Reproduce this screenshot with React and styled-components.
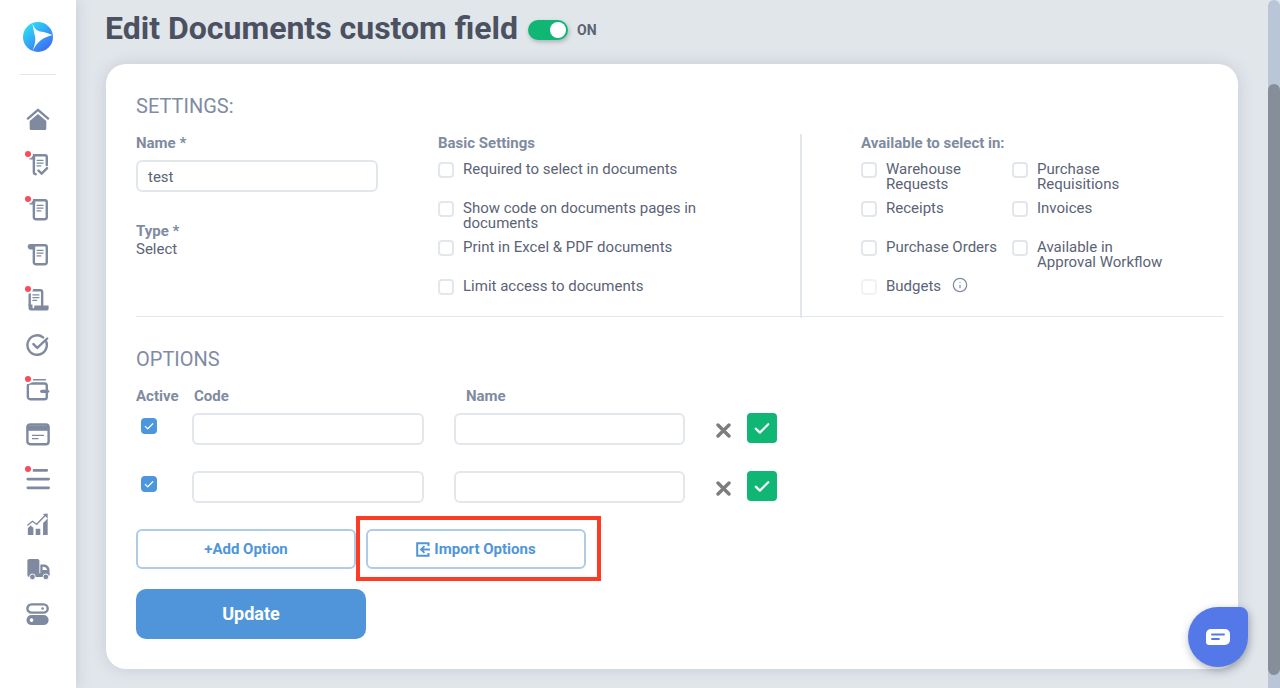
import React from 'react';
import styled, { createGlobalStyle } from 'styled-components';
import { Info } from 'lucide-react';

const GlobalStyle = createGlobalStyle`
  html, body {
    margin: 0;
    height: 100%;
    overflow: hidden;
    background: #e1e6eb;
    font-family: Roboto, "Liberation Sans", sans-serif;
  }
  * { box-sizing: border-box; }
`;

const Page = styled.div`
  display: flex;
  width: 1280px;
  height: 688px;
  overflow: hidden;
  position: relative;
`;

const Sidebar = styled.nav`
  width: 76px;
  flex: none;
  background: #fff;
  box-shadow: 0 0 14px rgba(90, 105, 125, 0.22);
  display: flex;
  flex-direction: column;
  align-items: center;
  padding-top: 22px;
  z-index: 2;
`;

const SideRule = styled.div`
  width: 36px;
  height: 1px;
  background: #e4e6e9;
  margin: 22px 0 32px;
`;

const NavItem = styled.div`
  position: relative;
  width: 24px;
  height: 45px;
  display: flex;
  align-items: flex-start;
  justify-content: center;
  color: #7f8aa0;
  &::before {
    content: '';
    display: ${props => (props.$dot ? 'block' : 'none')};
    position: absolute;
    left: -1px;
    top: -1px;
    width: 6px;
    height: 6px;
    border-radius: 50%;
    background: #fb4a58;
    box-shadow: 0 0 0 2px #fff;
    z-index: 1;
  }
`;

const Main = styled.main`
  flex: 1;
  min-width: 0;
  padding-left: 30px;
`;

const Header = styled.header`
  height: 64px;
  display: flex;
  align-items: flex-start;
`;

const Title = styled.h1`
  margin: 0 0 0 -1px;
  font-size: 32px;
  line-height: 56px;
  font-weight: 700;
  color: #4b5161;
`;

const Toggle = styled.div`
  width: 40px;
  height: 20px;
  border-radius: 10px;
  background: #10b774;
  box-shadow: 1px 2px 4px rgba(70, 80, 95, 0.35);
  margin: 20px 0 0 10px;
  display: flex;
  align-items: center;
  justify-content: flex-end;
  padding-right: 2px;
`;

const Knob = styled.div`
  width: 16px;
  height: 16px;
  border-radius: 50%;
  background: #fff;
`;

const ToggleText = styled.span`
  font-size: 14px;
  font-weight: 700;
  color: #5b6272;
  line-height: 20px;
  margin: 20px 0 0 9px;
`;

const Card = styled.section`
  width: 1132px;
  height: 605px;
  background: #fff;
  border-radius: 20px;
  box-shadow: 0 0 16px rgba(90, 105, 125, 0.2);
  padding: 32px 15px 0 30px;
`;

const SectionTitle = styled.h2`
  margin: ${props => props.$top || 0} 0 0;
  font-size: 20px;
  line-height: 20px;
  font-weight: 400;
  color: #808ca4;
`;

const SettingsRow = styled.div`
  display: grid;
  grid-template-columns: 302px 362px 1fr;
  height: 183px;
  margin-top: 18px;
  border-bottom: 1px solid #e2e7ec;
`;

const Col = styled.div`
  min-width: 0;
`;

const AvailableCol = styled.div`
  border-left: 2px solid #e2e7ec;
  padding-left: 59px;
`;

const Label = styled.div`
  font-size: 15px;
  line-height: 18px;
  font-weight: 700;
  color: #7f8ba0;
  margin-top: ${props => props.$top || 0};
`;

const Value = styled.div`
  font-size: 15px;
  line-height: 18px;
  color: #5b6375;
`;

const Input = styled.input`
  display: block;
  width: ${props => props.$width || '232px'};
  height: 32px;
  border: 2px solid #e2e7ec;
  border-radius: 6px;
  padding: 1px 10px 0;
  outline: none;
  font: 400 15px Roboto, sans-serif;
  color: #5b6375;
  background: #fff;
`;

const NameInput = styled(Input)`
  margin-top: 8px;
`;

const CheckGrid = styled.div`
  display: grid;
  grid-template-columns: ${props => props.$columns || '1fr'};
  grid-auto-rows: 39px;
  margin-top: 10px;
`;

const CheckRow = styled.div`
  display: flex;
  align-items: flex-start;
  gap: 9px;
  font-size: 15px;
  line-height: 15px;
  color: #5b6375;
  padding-right: ${props => props.$pad || 0};
`;

const Box = styled.span`
  flex: none;
  width: 16px;
  height: 16px;
  border: 2px solid #e2e7ec;
  border-radius: 4px;
  opacity: ${props => (props.$faded ? 0.5 : 1)};
`;

const InfoMark = styled(Info)`
  color: #7f8ba0;
  margin: -2px 0 0 2px;
  flex: none;
`;

const OptionHead = styled.div`
  display: flex;
  margin-top: 18px;
`;

const HeadCell = styled(Label)`
  width: ${props => props.$width};
`;

const OptionRow = styled.div`
  display: flex;
  align-items: flex-start;
  margin-top: ${props => props.$top};
`;

const ActiveCell = styled.div`
  width: 56px;
  padding: 5px 0 0 5px;
`;

const TickBox = styled.span`
  display: flex;
  align-items: center;
  justify-content: center;
  width: 16px;
  height: 16px;
  border-radius: 4px;
  background: #4c96df;
`;

const NextInput = styled(Input)`
  margin-left: 30px;
`;

const RemoveIcon = styled.svg`
  width: 15px;
  height: 15px;
  margin: 10px 0 0 31px;
  flex: none;
`;

const ConfirmButton = styled.button`
  width: 30px;
  height: 30px;
  margin-left: 16px;
  border: none;
  border-radius: 4px;
  background: #10b774;
  padding: 0;
  display: flex;
  align-items: center;
  justify-content: center;
`;

const ButtonRow = styled.div`
  display: flex;
  gap: 10px;
  margin-top: 26px;
`;

const OutlineButton = styled.button`
  position: relative;
  width: 220px;
  height: 40px;
  border: 2px solid #aecbe8;
  border-radius: 6px;
  background: #fff;
  color: #4f96d9;
  font: 700 15px Roboto, sans-serif;
  display: flex;
  align-items: center;
  justify-content: center;
  gap: 4px;
  padding: 0;
`;

const Highlight = styled.span`
  position: absolute;
  left: -12px;
  right: -17px;
  top: -15px;
  bottom: -14px;
  border: 4px solid #ff3b26;
  pointer-events: none;
`;

const UpdateButton = styled.button`
  display: block;
  width: 230px;
  height: 50px;
  margin-top: 20px;
  border: none;
  border-radius: 10px;
  background: #5095da;
  color: #fff;
  font: 700 18px/48px Roboto, sans-serif;
  padding: 0;
`;

const ScrollTrack = styled.div`
  width: 12px;
  flex: none;
  background: #b9c6d8;
  border-radius: 6px 6px 0 0;
  padding-top: 84px;
`;

const ScrollThumb = styled.div`
  height: 591px;
  background: #868e99;
  border-radius: 6px;
`;

const ChatBubble = styled.button`
  position: absolute;
  left: 1188px;
  top: 607px;
  width: 60px;
  height: 60px;
  border: none;
  padding: 0;
  background: #5478e8;
  border-radius: 30px 8px 30px 30px;
  box-shadow: 1px 3px 8px rgba(50, 60, 80, 0.4);
  display: flex;
  align-items: center;
  justify-content: center;
  z-index: 3;
`;

const s = { fill: 'none', stroke: 'currentColor', strokeWidth: 2.6, strokeLinecap: 'round', strokeLinejoin: 'round' };
const thin = { fill: 'none', stroke: 'currentColor', strokeWidth: 1.4, strokeLinecap: 'round' };

const curl = <path d="M3.500 1.500h6.500v5.500H5.500C2.500 7 1.500 4.500 2 3.200c.300-1 .800-1.700 1.500-1.700z" fill="currentColor" />;

const scrollBody = (
  <>
    <path {...s} d="M5 2.500h15.500a2 2 0 0 1 2 2V21a2 2 0 0 1-2 2H10.500a2 2 0 0 1-2-2V6" />
    {curl}
    <path {...thin} d="M12 8h6.500M12 11h6.500M12 14h4" />
  </>
);

const navIcons = [
  {
    dot: false,
    draw: (
      <>
        <path {...s} d="M2 11.500 13 2l11 9.500" />
        <path d="M13 6.500 22 14v8.500a1.500 1.500 0 0 1-1.500 1.500h-15A1.500 1.500 0 0 1 4 22.500V14z" fill="currentColor" />
      </>
    ),
  },
  {
    dot: true,
    draw: (
      <>
        <path {...s} d="M5 2.500h15.500a2 2 0 0 1 2 2V13M8.500 6v15a2 2 0 0 0 2 2" />
        {curl}
        <path {...thin} d="M12 8h6.500M12 11h6.500M12 14h4" />
        <path {...s} d="m13.500 19 3.400 3.400 6-6" />
      </>
    ),
  },
  { dot: true, draw: scrollBody },
  { dot: false, draw: scrollBody },
  {
    dot: true,
    draw: (
      <>
        <path {...s} d="M4 19V4.500a2 2 0 0 1 2-2h9.500a2 2 0 0 1 2 2V19" />
        <path d="M2.800 18v3.500A2.500 2.500 0 0 0 5.500 24.500H22.500a2 2 0 0 0 2-2V19H9v2c0 1-.800 1.300-1.400.9-.500-.4-.600-1-.600-2.400V18z" fill="currentColor" />
        <path {...thin} d="M7.500 7.500h6.500M7.500 10.500h6.500M7.500 13.500h4" />
      </>
    ),
  },
  {
    dot: false,
    draw: (
      <>
        <path {...s} d="M21.500 8.500a10.500 10.500 0 1 1-3-3.700" />
        <path {...s} d="m8 12 4.200 4.200L23 6" />
      </>
    ),
  },
  {
    dot: true,
    draw: (
      <>
        <path {...thin} d="M8 2h13" strokeWidth="1.600" />
        <rect {...s} x="2" y="6" width="20.500" height="17" rx="2.500" />
        <path {...s} d="M17 14.500h6.500" strokeWidth="3.400" />
      </>
    ),
  },
  {
    dot: false,
    draw: (
      <>
        <rect {...s} x="1.500" y="1.500" width="23" height="21.500" rx="3" />
        <path d="M2 2.500h22v6H2z" fill="currentColor" />
        <path {...thin} d="M7 13.500h12M7 17h6" />
      </>
    ),
  },
  {
    dot: true,
    draw: (
      <path {...s} strokeWidth="3" d="M8 2.500h14.500M2 12h22.500M2 21.500h22.500" />
    ),
  },
  {
    dot: false,
    draw: (
      <>
        <path d="M2 24v-7.500l3-3 3 2.500v8zM10.500 24v-7h5v7zM18.500 24V11l5-5v18z" fill="currentColor" />
        <path {...thin} strokeWidth="1.500" d="M2 13 7 9l4.500 3.200L21 2.500" />
        <path fill="currentColor" d="M23.500 0.500v5.500l-5.200-5z" />
      </>
    ),
  },
  {
    dot: false,
    draw: (
      <>
        <path d="M3.500 1h9a2 2 0 0 1 2 2v14h-13V3a2 2 0 0 1 2-2z" fill="currentColor" />
        <path d="M15.500 7h4c3.500 0 6 3 6 6v5h-10z" fill="currentColor" />
        <path d="M1.500 16.500h24v2a2 2 0 0 1-2 2h-20a2 2 0 0 1-2-2z" fill="currentColor" />
        <path d="M18 9.500v3.500h5c-.300-1.500-2-3.500-5-3.500z" fill="#fff" />
        <circle cx="7" cy="20.500" r="3.100" fill="currentColor" stroke="#fff" strokeWidth="1" />
        <circle cx="21.500" cy="20.500" r="3.100" fill="currentColor" stroke="#fff" strokeWidth="1" />
      </>
    ),
  },
  {
    dot: false,
    draw: (
      <>
        <rect {...s} x="1.500" y="1.500" width="22" height="9" rx="4.500" />
        <circle cx="18" cy="6" r="1.400" fill="currentColor" />
        <rect x="0.500" y="13" width="24" height="11" rx="5.500" fill="currentColor" />
        <circle cx="6" cy="18.500" r="2" fill="#fff" />
      </>
    ),
  },
];

const Logo = () => (
  <svg width="30" height="30" viewBox="0 0 30 30">
    <defs>
      <linearGradient id="logoFill" x1="0.15" y1="0.1" x2="0.85" y2="0.95">
        <stop offset="0" stopColor="#2bdcf5" />
        <stop offset="1" stopColor="#3f68f5" />
      </linearGradient>
    </defs>
    <circle cx="15" cy="15" r="15" fill="url(#logoFill)" />
    <path d="M9.500 1C11 6 13 9 19 9.800c3 .4 7 1.700 10.500 3.200C25 14.500 21 15.500 17.500 18.500 14 21 11.500 25 9.500 29.500 11.500 23 13.500 18 11.500 12.500 10.800 9 10 5 9.500 1z" fill="#fff" />
  </svg>
);

const Tick = ({ size, width }) => (
  <svg width={size} height={size} viewBox="0 0 16 16">
    <path d="m3 8.500 3.300 3.200L13 5" fill="none" stroke="#fff" strokeWidth={width} strokeLinecap="round" strokeLinejoin="round" />
  </svg>
);

const Remove = () => (
  <RemoveIcon viewBox="0 0 15 15">
    <path d="M2 2l11 11M13 2 2 13" fill="none" stroke="#7d7d7d" strokeWidth="3.400" strokeLinecap="round" />
  </RemoveIcon>
);

const ImportIcon = () => (
  <svg width="14" height="15" viewBox="0 0 14 15">
    <path d="M12.500 4V1.200H1.200v12.600h11.300V11" fill="none" stroke="#4f96d9" strokeWidth="2" />
    <path d="M14 7.500H5.500M8.500 4.200 5 7.500l3.500 3.300" fill="none" stroke="#4f96d9" strokeWidth="1.800" />
  </svg>
);

const basicSettings = [
  'Required to select in documents',
  'Show code on documents pages in documents',
  'Print in Excel & PDF documents',
  'Limit access to documents',
];

const availableIn = [
  'Warehouse Requests',
  'Purchase Requisitions',
  'Receipts',
  'Invoices',
  'Purchase Orders',
  'Available in Approval Workflow',
];

export default function App() {
  return (
    <Page>
      <GlobalStyle />
      <Sidebar>
        <Logo />
        <SideRule />
        {navIcons.map((icon, i) => (
          <NavItem key={i} $dot={icon.dot}>
            <svg width="26" height="25" viewBox="0 0 26 25">{icon.draw}</svg>
          </NavItem>
        ))}
      </Sidebar>
      <Main>
        <Header>
          <Title>Edit Documents custom field</Title>
          <Toggle><Knob /></Toggle>
          <ToggleText>ON</ToggleText>
        </Header>
        <Card>
          <SectionTitle>SETTINGS:</SectionTitle>
          <SettingsRow>
            <Col>
              <Label>Name *</Label>
              <NameInput $width="242px" value="test" readOnly />
              <Label $top="30px">Type *</Label>
              <Value>Select</Value>
            </Col>
            <Col>
              <Label>Basic Settings</Label>
              <CheckGrid>
                {basicSettings.map(text => (
                  <CheckRow key={text} $pad="60px">
                    <Box />
                    <span>{text}</span>
                  </CheckRow>
                ))}
              </CheckGrid>
            </Col>
            <AvailableCol>
              <Label>Available to select in:</Label>
              <CheckGrid $columns="151px 160px">
                {availableIn.map(text => (
                  <CheckRow key={text}>
                    <Box />
                    <span>{text}</span>
                  </CheckRow>
                ))}
                <CheckRow>
                  <Box $faded />
                  <span>Budgets</span>
                  <InfoMark size={16} strokeWidth={1.8} />
                </CheckRow>
              </CheckGrid>
            </AvailableCol>
          </SettingsRow>

          <SectionTitle $top="32px">OPTIONS</SectionTitle>
          <OptionHead>
            <HeadCell $width="58px">Active</HeadCell>
            <HeadCell $width="272px">Code</HeadCell>
            <HeadCell $width="100px">Name</HeadCell>
          </OptionHead>
          {['8px', '26px'].map(top => (
            <OptionRow key={top} $top={top}>
              <ActiveCell>
                <TickBox><Tick size={12} width={1.6} /></TickBox>
              </ActiveCell>
              <Input readOnly />
              <NextInput $width="231px" readOnly />
              <Remove />
              <ConfirmButton><Tick size={20} width={1.7} /></ConfirmButton>
            </OptionRow>
          ))}
          <ButtonRow>
            <OutlineButton>+Add Option</OutlineButton>
            <OutlineButton>
              <ImportIcon />
              Import Options
              <Highlight />
            </OutlineButton>
          </ButtonRow>
          <UpdateButton>Update</UpdateButton>
        </Card>
      </Main>
      <ScrollTrack>
        <ScrollThumb />
      </ScrollTrack>
      <ChatBubble>
        <svg width="24" height="16" viewBox="0 0 24 16">
          <path d="M5 0h14a5 5 0 0 1 5 5v6a5 5 0 0 1-5 5H3a3 3 0 0 1-3-3V5a5 5 0 0 1 5-5z" fill="#fff" />
          <path d="M6 5.500h12M6 10h7" stroke="#5478e8" strokeWidth="1.800" strokeLinecap="round" />
        </svg>
      </ChatBubble>
    </Page>
  );
}
